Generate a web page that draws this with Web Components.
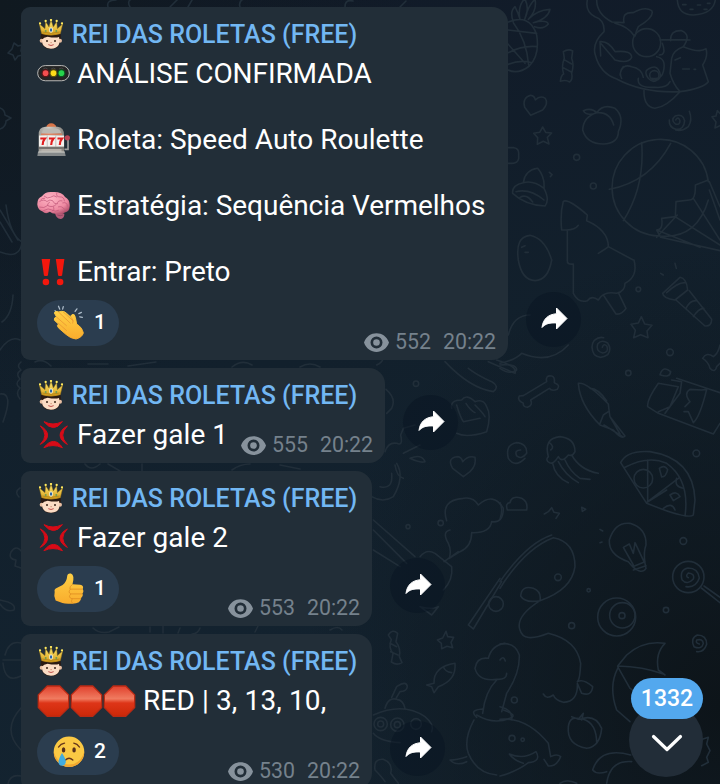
<!DOCTYPE html>
<html lang="pt-BR">
<head>
<meta charset="utf-8">
<title>Rei das Roletas</title>
<style>
html,body{margin:0;width:720px;height:784px;overflow:hidden;background:#111c27}
body{font-family:Roboto,"Liberation Sans",sans-serif;color:#fff}
</style>
</head>
<body>
<chat-screen></chat-screen>

<template id="wallpaper">
<style>
:host{display:block;width:720px;height:784px;background:
 radial-gradient(ellipse 420px 460px at 100% 90%,#0d1419 0,#0d141900 100%),
 radial-gradient(ellipse 420px 400px at 0 0,#101920 0,#10192000 100%),
 linear-gradient(170deg,#111a28 0,#12202c 45%,#142431 100%)}
svg{display:block;fill:none;stroke:#212e39;stroke-width:4.8;stroke-linecap:round;stroke-linejoin:round}
</style>
<svg width="720" height="784" viewBox="0 0 720 784">
<g transform="translate(500 0) scale(.33333)">
 <!-- pineapple -->
 <path d="M20 68Q90 38 110 105Q120 165 88 198Q50 228 15 205M24 90L110 100M22 130L75 190M40 68Q80 120 86 195M25 158Q70 135 112 140M22 194Q60 178 95 188M40 65Q28 35 45 20Q55 40 60 58Q52 20 74 -4Q90 25 74 58Q85 15 105 -2Q112 30 85 58Q110 30 150 28Q145 55 100 68Q140 58 145 72Q130 90 104 80"/>
 <!-- sweet -->
 <path d="M190 155q15-10 28-2l-3 22q8 18 0 45q4 18-6 26q-12-8-28-2q2-18 10-22q-8-22 2-47zM191 178l24 14M188 202l26 14"/>
 <!-- cat with ring -->
 <path d="M262 0Q255 35 285 50Q315 60 312 95Q275 130 286 165Q300 220 350 237Q430 280 540 275M290 0Q290 42 336 66L372 68Q365 35 400 38Q435 18 455 32Q465 50 415 80Q408 95 405 108M345 70Q385 80 403 108M302 168L300 125Q325 122 345 155Q395 150 395 172Q385 192 345 180L302 130M360 225Q365 190 395 200Q425 205 430 232M365 235Q355 215 370 200M480 120Q500 118 570 120M512 122Q510 90 545 92Q575 105 550 140Q600 160 618 146Q625 170 608 195L625 245Q610 265 540 275Q500 320 465 325Q430 320 432 270M550 140Q520 150 515 175L510 220Q520 255 540 275M487 130Q500 165 478 165M415 235Q410 265 465 262Q500 265 510 245M445 235q-15-20 0-28q25-15 33 8q10 20-12 28q-10 4-21-8zM470 170Q500 175 490 215Q485 240 455 235M525 180l16-7M548 207h20M582 208h5"/>
 <circle cx="440" cy="128" r="42"/><circle cx="463" cy="226" r="14"/>
 <path d="M532 0Q535 45 580 45Q640 42 646 0M548 14h10M570 28h9M592 15h10M612 28h9M622 10h8"/>
 <path d="M92 346L74 322Q66 293 92 286Q104 287 106 300Q120 285 136 295Q146 310 128 330zM128 381l9 16 18 2-13 13 5 20-17-8-18 9 1-20-12-13 18-3z"/>
 <path d="M290 338Q260 350 250 332Q275 322 290 338Q310 310 345 325Q375 350 355 395Q355 430 310 432Q260 432 248 390Q250 350 290 338Q330 335 341 375"/>
 <path d="M527 360q8-12 13 2q0 14-14 10q-15-12 0-24q22-8 28 14q-2 28-26 26q-22-6-20-28M568 334q10 26-3 46q-18 15-38 10"/>
 <path d="M660 340l-8-8-4 16-12 2 12 16-3 18 15-7"/>
 <circle cx="230" cy="472" r="9"/><circle cx="280" cy="558" r="9"/>
 <path d="M22 443h20q15 3 14 18v15q-3 14-20 14H20M70 548Q75 510 113 505Q135 530 132 565M70 548Q35 555 38 580Q75 615 135 618Q150 600 132 565Q100 540 70 548M48 575Q90 565 132 600M60 592Q80 580 98 606M148 517l8 7-5 6"/>
 <!-- balloon -->
 <path d="M625 545A145 145 0 1 0 475 708Q590 720 625 600M425 428Q435 560 370 662M512 430Q450 545 328 568M625 540L586 555Q588 600 568 600L528 605L526 650L485 655Q490 690 470 690L482 712L660 752M628 570L660 660M580 595L660 720M525 650L660 735M470 690L600 742M628 545L660 620M532 645L470 712"/>
 <path d="M185 690Q180 640 190 604Q205 595 262 645L260 662Q325 690 325 740L400 780M185 690h15Q225 690 235 676M202 690V780M325 740Q320 745 295 760M55 780Q45 710 90 706Q135 715 155 780M65 742l10-5M75 757h10"/>
</g>
<g transform="translate(500 260) scale(.33333)">
 <path d="M55 0Q65 60 105 62Q145 60 155 0M202 0Q200 15 220 12V100Q235 130 262 122Q275 105 295 120Q310 92 350 100Q375 95 375 70Q415 50 402 0M312 108L348 162Q365 165 378 145L355 98"/>
 <path d="M488 100L540 52Q560 55 563 90L525 120Q490 115 488 100M500 98Q535 65 558 68M528 120L615 198Q635 200 635 178L568 92M558 145Q570 120 590 122M580 170Q595 145 612 145M525 10l4 15M482 40l8 5"/>
 <path d="M424 170l10 22 22 4-15 17 3 20-22-9-21 9 5-22-13-18 22-4z"/>
 <path d="M307 262q4-14 14-3q6 19-13 20q-22-5-15-27q12-15 30-3q13 18 0 35q-22 16-40 0q-14-24 0-43q14-12 28-8"/>
 <path d="M25 225Q40 165 90 165M0 310Q45 300 65 280Q150 315 205 255M0 315Q50 310 50 330Q30 345 0 325"/>
 <path d="M70 407L140 365Q135 345 155 348Q165 350 163 368Q183 375 172 388Q155 395 148 385L92 420Q100 435 82 442Q68 440 70 430Q50 420 58 408z"/>
 <path d="M235 370Q260 365 325 432Q328 460 330 470L375 528Q365 540 340 510L300 495Q240 435 235 370M270 385Q295 385 320 423M300 490L310 465L325 455M330 470L360 522M312 495L368 530"/>
 <path d="M480 344Q490 315 512 335Q510 355 480 344M475 370Q440 420 443 440L475 460L640 522L660 490M475 370L535 380L510 440L475 455M515 360L545 365L540 400L495 460M530 355L620 385L660 398M555 440L570 425Q550 400 570 388L605 390L620 388Q600 470 580 488L565 455L552 455"/>
 <path d="M660 255Q655 280 640 290Q620 275 608 295Q625 305 630 325Q645 340 650 320L660 310"/>
 <circle cx="510" cy="277" r="10"/><circle cx="385" cy="339" r="8"/><circle cx="589" cy="580" r="10"/><circle cx="415" cy="88" r="7"/>
 <path d="M75 595Q45 625 25 595Q15 555 48 548Q82 550 80 580Q65 600 50 588Q42 570 62 570M148 608Q135 600 145 590Q130 535 180 530Q225 535 225 575Q218 590 205 585Q185 610 175 590Q160 615 148 608M158 610Q165 650 205 668M175 605Q195 645 235 668M195 600Q210 635 240 655L270 658M215 585Q240 630 295 640M152 570Q165 560 148 548"/>
 <path d="M362 608Q380 570 450 575Q580 595 585 720L580 765Q565 780 440 730Q420 700 362 608M375 622Q445 585 500 610Q570 660 555 768M443 600V725L535 655M440 728L500 690"/><circle cx="430" cy="656" r="28"/>
 <path d="M478 625q15-12 25 4q-5 22-18 22zM530 655q-8 25 20 30M510 705q20-15 30 5l-20 12zM490 745q25-20 35 5M22 750Q15 730 30 728Q35 705 65 715Q85 725 80 750zM133 762L145 755L155 743L162 757L178 760L168 775M0 728q10 20 0 50M245 742l12 6-10 6z"/>
</g>
<g transform="translate(500 520) scale(.33333)">
 <path d="M0 185Q80 70 155 45M0 205Q75 85 160 53Q225 65 225 140Q215 210 120 242Q75 250 62 228Q65 195 100 205Q125 215 120 242Q45 290 60 330Q70 370 145 340Q230 360 242 430Q240 480 232 485Q250 475 278 500Q275 530 245 520L232 490Q235 545 190 547Q165 540 160 525Q140 540 130 522"/>
 <path d="M398 140L385 125Q325 105 328 60Q345 5 390 10Q440 25 438 75Q430 95 435 130L438 145Q425 165 398 140L435 125M400 135L370 82L388 72L400 100L405 68L432 125M400 150L438 137"/>
 <circle cx="550" cy="63" r="10"/><circle cx="174" cy="172" r="10"/><circle cx="215" cy="317" r="9"/><circle cx="498" cy="270" r="8"/><circle cx="43" cy="540" r="9"/><circle cx="266" cy="211" r="5"/>
 <circle cx="565" cy="171" r="47"/><path d="M565 173q-10-5 0-14q20 2 15 18q-18 20-34 2q-8-30 18-35q30 0 34 30q-10 30-40 26M604 204L660 248M612 198L660 232"/>
 <circle cx="350" cy="291" r="57"/><circle cx="367" cy="286" r="38"/><circle cx="366" cy="287" r="9"/>
 <path d="M598 372q-12-2-8-12q18-5 20 10q-5 20-28 10q-12-25 10-35q28 0 28 28q-8 25-30 22"/>
 <path d="M495 370Q430 360 380 405L353 438Q430 440 490 462M495 370Q465 400 475 450L495 465M353 440L390 505L430 530M353 445Q325 500 350 570L390 605"/>
 <path d="M205 620Q210 585 240 598Q285 580 305 625Q300 680 260 685Q200 675 205 620M250 598Q290 610 290 670M215 590L235 598L250 580L245 600"/>
 <path d="M0 372Q45 365 58 405Q60 460 20 520L5 575M0 598Q80 590 145 670L152 710Q170 700 182 710Q170 740 145 738L132 718M0 768Q50 755 85 728Q125 725 108 695Q70 720 28 702Q40 720 70 730M0 560Q40 570 35 600"/>
 <circle cx="36" cy="655" r="9"/><circle cx="68" cy="659" r="5"/>
 <path d="M392 705Q300 680 278 750Q290 765 320 755M395 725Q330 720 320 790M180 790Q200 775 230 790M600 660l25-8-5 20 10 20-10 20 5 15-20 10M300 28l8 5M300 68l6-2"/>
</g>
<g transform="translate(360 350) scale(.33333)">
 <path d="M255 35Q330 115 400 125Q420 110 395 95Q350 75 325 55M385 35L465 70Q475 50 410 30M50 45Q70 35 68 25M78 118Q110 145 95 175L80 190"/>
 <path d="M290 250Q320 265 380 245Q395 195 380 170Q370 145 345 155Q320 130 305 150Q270 150 275 175M318 160Q330 180 345 188M290 165Q300 200 310 215L360 205M345 165Q370 190 375 200"/>
 <path d="M310 380L278 355Q260 325 290 320Q305 320 308 335Q325 315 345 322Q350 345 330 365z"/>
 <path d="M75 305Q85 275 110 280Q130 290 122 255L130 235L165 225M130 310L180 285M150 325Q185 310 195 335Q180 340 150 325M110 340Q135 380 100 440Q70 460 35 440M60 410Q100 420 95 370M105 345Q110 380 130 385"/>
 <path d="M260 512Q240 450 310 445Q340 440 355 465Q400 425 430 475Q430 520 395 515Q390 550 335 548Q335 590 300 605L268 625Q275 600 265 580Q245 545 270 540"/>
 <path d="M40 510L165 620M40 540L140 640M40 600L120 650M180 620Q200 595 225 610L275 650Q280 690 250 720M252 635L295 605"/>
 <circle cx="242" cy="519" r="8"/><circle cx="168" cy="101" r="8"/><circle cx="144" cy="530" r="6"/>
</g>
<g transform="translate(360 560) scale(.33333)">
 <path d="M325 195L420 55M340 207L425 65M325 195L340 207"/><circle cx="408" cy="132" r="22"/>
 <path d="M85 225q12-20 28-5l-5 25q15 20 10 45l8 18q-15 10-32-2l5-25q-15-20-5-42zM90 250l20 10M92 275l22 10M258 214l5 16 18 2-8 15 5 16-17-4-16 7-1-16-12-10 16-6z"/>
 <path d="M222 370Q220 320 285 310Q290 360 235 380L222 398L215 380L200 375zM250 320Q255 335 275 338"/>
 <path d="M345 325Q350 290 385 295Q395 255 435 250M345 325Q355 365 410 358Q440 360 440 340M410 360Q375 395 368 460M420 300q10-15 16 3M350 472Q325 450 368 447M430 450Q475 465 450 475Q400 495 350 465M342 480Q310 540 325 580Q350 640 410 645M320 605Q290 620 270 600Q290 600 320 590"/>
 <path d="M40 465Q130 425 195 470Q225 495 215 515M40 520Q60 545 120 548M75 445Q85 410 110 418Q130 420 135 445M95 412L110 380Q140 360 142 380Q140 395 120 395L108 415"/><circle cx="62" cy="492" r="20"/><circle cx="62" cy="492" r="9"/><circle cx="112" cy="494" r="20"/><circle cx="112" cy="494" r="9"/><circle cx="168" cy="492" r="16"/>
 <path d="M45 630Q40 595 70 598Q100 610 92 640L115 670M45 630Q65 650 75 665M180 140Q220 150 235 140L215 165z"/>
</g>
<g stroke-width="1.6">
 <path d="M14 43l4 3 4-1-1 6 2 4-5 1-3 4-2-5-5-2 4-4zM0 108q5 2 5 7l6 3-5 3q0 6-6 8M0 210l18 30M0 222l12 20M6 205Q10 235 22 242Q20 260 0 252M13 295Q12 315 2 322M0 350Q10 335 20 340"/>
 <path d="M0 394Q14 392 3 422M21 362q-5 4 0 8q-6 4-1 9q-6 5 0 9q-5 5 0 11M20 488q-6 4-1 9M22 552q-6-8-11 0q-3 7 5 8l-1 6 6 2M0 600l8 2q8 3 6 8q-8 3-14-6M3 663Q5 684 21 676M3 660h18M5 655q4-15 16-12M21 708q-20 22 0 42M8 784q2-10 13-8"/>
 <path d="M108 7Q106 0 116 0M130 7Q126 0 134-2M170 7l8-8M188 7l4-7M240 7q-2-6 5-9M345 7q0-8 8-6M400 7l6-6M35 362q8-4 16 4M88 364h20M128 366l28-4M232 367q10-8 20-2M85 464q6 8 15 0M108 464l12 7M142 464v7M232 470q8-6 18-6M93 628q6 6 16 4l10-5M150 632v-5M163 633v-7M180 628l-2 5M192 634q6 0 8-6M255 632l3-6M300 367q10-6 20 0M280 465l20 4M330 630q8-5 12 0"/>
</g>
</svg>
</template>

<script>
/* Emoji artwork: a body glyph lives in a 100-unit square. */
const GRAD = `<defs>
<linearGradient id="stop" x1="0" y1="0" x2="0" y2="1"><stop offset="0" stop-color="#e0402c"/><stop offset=".42" stop-color="#f07b60"/><stop offset=".56" stop-color="#de3518"/><stop offset="1" stop-color="#cc2808"/></linearGradient>
<linearGradient id="gold" x1="0" y1="0" x2="0" y2="1"><stop offset="0" stop-color="#fff07a"/><stop offset="1" stop-color="#d79a18"/></linearGradient>
<linearGradient id="hand" x1="0" y1="0" x2="0" y2="1"><stop offset="0" stop-color="#ffd045"/><stop offset="1" stop-color="#f9ac2d"/></linearGradient>
<linearGradient id="steel" x1="0" y1="0" x2="1" y2="0"><stop offset="0" stop-color="#9e9c97"/><stop offset=".4" stop-color="#d0cdc6"/><stop offset="1" stop-color="#87837d"/></linearGradient>
<radialGradient id="brain" cx=".4" cy=".3" r=".75"><stop offset="0" stop-color="#ffb5c4"/><stop offset=".7" stop-color="#ee8aa2"/><stop offset="1" stop-color="#b4526e"/></radialGradient>
</defs>`;
const ART = {
 king: ['0 0 72 90', `<path d="M6 44Q2 78 20 87Q36 94 54 86Q68 74 65 46z" fill="#2a1a13"/>
  <circle cx="8" cy="65" r="6" fill="#e9bfa2"/><circle cx="63" cy="65" r="6" fill="#e9bfa2"/>
  <path d="M9 62Q14 54 26 53Q48 58 60 54Q68 88 36 89Q8 88 9 62z" fill="#fbdcc4"/>
  <circle cx="24" cy="66" r="3" fill="#3b2519"/><circle cx="48" cy="66" r="3" fill="#3b2519"/>
  <path d="M28 77q8 5 16 0" stroke="#c0504b" stroke-width="3" fill="none"/><path d="M34 71h5" stroke="#d89e83" stroke-width="3"/>
  <path d="M8 44L1 15L18 29L20 8L30 24L36 3L43 24L53 8L55 29L71 15L64 44Q36 53 8 44z" fill="url(#gold)" stroke="#9b7414" stroke-width="1.5"/>
  <g fill="#ffe95e"><circle cx="3" cy="13" r="3.5"/><circle cx="20" cy="6" r="3.5"/><circle cx="36" cy="3" r="3.5"/><circle cx="53" cy="6" r="3.5"/><circle cx="69" cy="13" r="3.5"/></g>
  <path d="M10 39Q36 47 62 39" stroke="#9c7818" stroke-width="2" fill="none"/><ellipse cx="36" cy="33" rx="6" ry="8" fill="#f4f0ce"/><ellipse cx="36" cy="33" rx="3.5" ry="5" fill="#2c63a4"/><circle cx="20" cy="36" r="3" fill="#6b9b52"/><circle cx="52" cy="36" r="3" fill="#6b9b52"/>`],
 lights: ['0 0 100 100', `<rect x="2" y="26" width="96" height="46" rx="23" fill="#242424" stroke="#b9b9b7" stroke-width="3"/>
  <circle cx="26" cy="49" r="12" fill="#5d1517"/><circle cx="50" cy="49" r="12" fill="#5c5210"/><circle cx="74" cy="49" r="12" fill="#0e511f"/>
  <circle cx="26" cy="49" r="8.5" fill="#f34e50"/><circle cx="50" cy="49" r="8.5" fill="#ffdc19"/><circle cx="74" cy="49" r="8.5" fill="#26d34c"/>
  <path d="M19 36q7-5 13 0M43 36q7-5 13 0M67 36q7-5 13 0" stroke="#555" stroke-width="2" fill="none"/>`],
 slot: ['0 0 100 100', `<path d="M28 13Q30 2 43 1Q56 2 59 13z" fill="#d87549"/><path d="M83 80h11V48" stroke="#9b9b9b" stroke-width="5" fill="none"/><circle cx="92" cy="45" r="8" fill="#bd4556"/>
  <path d="M5 37Q4 12 25 11H62Q83 13 82 37V90H5z" fill="url(#steel)"/><path d="M15 30Q18 17 30 17H58Q70 18 73 30z" fill="#bcb9b3"/><path d="M12 34h64" stroke="#df7c58" stroke-width="4"/>
  <rect x="6" y="38" width="76" height="34" fill="#f4f1ed"/><path d="M31 38v34M57 38v34" stroke="#aaa" stroke-width="2"/><path d="M10 47h14q-7 8-7 20M36 47h14q-7 8-7 20M62 47h14q-7 8-7 20" stroke="#e01f20" stroke-width="6.500" fill="none"/>
  <path d="M6 72h76v7H6z" fill="#77736f"/><path d="M14 79h60v10H14z" fill="#b6b2ab"/><path d="M3 87h81l3 13H1z" fill="#85898a"/><path d="M4 88h80" stroke="#d2d1cb" stroke-width="3"/>`],
 brain: ['0 0 100 100', `<path d="M54 70Q57 92 73 91Q83 88 83 75z" fill="#b65b78"/><path d="M1 48Q0 28 15 22Q25 7 46 9Q75 7 85 24Q101 32 99 53Q98 69 84 71Q74 80 62 74Q48 77 39 69Q26 78 17 68Q3 65 1 48z" fill="url(#brain)"/>
  <path d="M8 55q14 5 24-5q15 8 26-3M8 38q12-9 22 0q9-8 17-3M22 22q10 9 19 3q10-9 19-1M60 12q-4 12 10 12q12-1 13 12M48 37q4 10 14 8q0-12 14-9M78 42q14-4 14 10M65 54q12-3 18 7M20 65q15-9 26-1q10 6 19 1M38 40q-8 4-6 10M50 54q4 10-3 12M12 32q4-5 11-4" stroke="#c0587a" stroke-width="2.2" fill="none" stroke-linecap="round"/>
  <path d="M62 79q8 4 17 0" stroke="#863f58" stroke-width="2" fill="none"/>`],
 bang: ['0 0 100 100', `<g fill="#f3170d"><path d="M14 12h26l-7 50q-6 4-12 0zM57 12h26l-7 50q-6 4-12 0z"/><circle cx="27" cy="82" r="10"/><circle cx="70" cy="82" r="10"/></g>`],
 anger: ['0 0 100 100', `<g fill="#d80b17" stroke="#d80b17" stroke-width="3" stroke-linejoin="round"><path d="M21 11Q48 25 77 11Q64 29 50 29Q35 29 21 11z"/><path d="M21 90Q48 77 77 90Q65 71 50 71Q35 71 21 90z"/><path d="M10 24Q32 36 32 52Q32 68 10 80Q24 66 24 52Q24 38 10 24z"/><path d="M92 24Q70 36 70 52Q70 68 92 80Q78 66 78 52Q78 38 92 24z"/></g>`],
 stop: ['0 0 100 100', `<path d="M31 6H69L96 33V71L69 98H31L4 71V33z" fill="url(#stop)" stroke="#b92a14" stroke-width="4" stroke-linejoin="round"/>`],
 clap: ['0 0 100 110', `<g fill="none" stroke="#aebdca" stroke-width="4" stroke-linecap="round"><path d="M6 18l4 5M17 4l4 9M32 5l-2 8M69 20l6-8M81 27l8-4M84 37l8 2"/></g>
  <path d="M60 30Q68 27 70 39L74 60Q91 70 95 88Q91 102 72 107Q54 105 40 92L17 72Q10 64 17 60L4 48Q2 39 11 38L4 25Q7 17 17 22L27 20Q35 19 42 26L58 40Q54 32 60 30z" fill="url(#hand)" stroke="url(#hand)" stroke-width="3"/>
  <path d="M11 38L42 65M17 58L42 80M17 22L54 57M32 22L63 50M58 40Q66 49 62 57" stroke="#e89530" stroke-width="2.4" fill="none" stroke-linecap="round"/>`],
 thumb: ['0 0 100 110', `<path d="M5 66Q2 57 13 53L30 44Q43 33 44 18Q45 6 56 8Q69 13 61 42L85 43Q98 45 93 57Q98 63 92 71Q96 78 88 85Q88 102 60 103Q33 103 23 98L8 93Q1 80 5 66z" fill="url(#hand)"/>
  <path d="M61 42Q50 49 53 57H90M54 58Q45 67 56 72H91M55 73Q46 83 59 87H87M60 88Q54 98 62 102" stroke="#df8e22" stroke-width="2.6" fill="none" stroke-linecap="round"/>`],
 cry: ['0 0 100 110', `<circle cx="50" cy="56" r="48" fill="#fbc944"/><path d="M2 56a48 48 0 0 0 96 0q-12 40-48 40T2 56z" fill="#f1a62f"/>
  <path d="M17 41Q24 31 36 29M65 29Q76 31 83 41" stroke="#65351b" stroke-width="4" fill="none" stroke-linecap="round"/><ellipse cx="33" cy="50" rx="5.5" ry="8" fill="#56301d"/><ellipse cx="66" cy="50" rx="5.5" ry="8" fill="#56301d"/>
  <path d="M39 82Q50 71 62 82" stroke="#65351b" stroke-width="4.5" fill="none" stroke-linecap="round"/><path d="M28 60Q41 80 40 89Q37 100 28 100Q17 99 17 88Q18 77 28 60z" fill="#42acdf"/>`]
};

class ChatWallpaper extends HTMLElement{
 constructor(){super();this.attachShadow({mode:'open'}).append(document.getElementById('wallpaper').content.cloneNode(true));}
}
class EmojiIcon extends HTMLElement{
 connectedCallback(){
  if(this.shadowRoot)return;
  const [vb,art]=ART[this.getAttribute('name')];
  this.attachShadow({mode:'open'}).innerHTML=`<style>:host{display:inline-block;width:33px;height:33px;vertical-align:top}svg{display:block;width:100%;height:100%}</style><svg viewBox="${vb}" aria-hidden="true">${GRAD}${art}</svg>`;
 }
}
class ReactionPill extends HTMLElement{
 constructor(){super();this.attachShadow({mode:'open'}).innerHTML=`<style>
 :host{display:flex;box-sizing:border-box;width:82px;height:46px;border-radius:23px;background:#2b3d4f;align-items:center;padding-left:16px;gap:9px;font-size:21px;font-weight:500;line-height:24px}
 emoji-icon{width:32px;height:35px;margin-top:-1px}span{margin-top:-3px}
 </style><emoji-icon name="${this.getAttribute('emoji')||'thumb'}"></emoji-icon><span><slot></slot></span>`;}
}
class ViewMeta extends HTMLElement{
 constructor(){super();this.attachShadow({mode:'open'}).innerHTML=`<style>
 :host{display:flex;align-items:center;font-size:21.3px;line-height:25px;color:#75818c;white-space:pre}
 svg{display:block;margin:1px 6px 0 0}.time{margin-left:12px}
 </style><svg width="25" height="19" viewBox="0 0 25 19"><path fill="#87929c" fill-rule="evenodd" d="M0 9.5C4-3 21-3 25 9.5C21 22 4 22 0 9.5ZM12.5 3.5a6 6 0 1 0 0 12a6 6 0 1 0 0-12Z"/><circle cx="12.5" cy="9.5" r="3.3" fill="#87929c"/></svg><span><slot></slot></span><span class="time"><slot name="time"></slot></span>`;}
}
class ShareButton extends HTMLElement{
 constructor(){super();this.attachShadow({mode:'open'}).innerHTML=`<style>
 :host{display:grid;place-items:center;width:55px;height:55px;border-radius:50%;background:#08142180}
 svg{display:block;margin-top:-2px;margin-left:1px}
 </style><svg width="27" height="23" viewBox="0 0 27 23"><path fill="#fff" stroke="#fff" stroke-width="1" stroke-linejoin="round" d="M15.5 1L26 11.5L15.5 22V16C9 15.6 4.500 16.500 1 20.500C2 12 7 7.500 15.500 6.700Z"/></svg>`;}
}
class ChatMessage extends HTMLElement{
 constructor(){super();this.attachShadow({mode:'open'}).innerHTML=`<style>
 :host{display:flex;align-items:flex-end;gap:18px}
 .bubble{display:grid;grid-template-rows:minmax(0,1fr);box-sizing:border-box;width:var(--w);height:var(--h);padding:12px 12px 6px 16px;border-radius:9px 16px 16px 9px;background:#222e38}
 .bubble>*{grid-area:1/1}
 .content{display:flex;flex-direction:column;min-height:0}
 header{display:flex;align-items:flex-start;height:38px;flex:none;color:#72b7f3;font-weight:500;font-size:25px;line-height:31px;white-space:nowrap}
 header emoji-icon{width:24px;height:30px;margin:0 9px 0 2px}
 .body{flex:none;font-size:28px;line-height:33px;white-space:pre;color:#fff}
 .react{display:flex;margin-top:12px}
 slot[name=meta]{display:block;align-self:end;justify-self:end}
 share-button{margin-bottom:13px}
 </style><div class="bubble"><div class="content"><header><emoji-icon name="king"></emoji-icon><span>REI DAS ROLETAS (FREE)</span></header><div class="body"><slot></slot></div><div class="react"><slot name="reaction"></slot></div></div><slot name="meta"></slot></div><share-button></share-button>`;}
}
class MessageLine extends HTMLElement{
 constructor(){super();this.attachShadow({mode:'open'}).innerHTML=`<style>:host{display:flex;height:33px;margin-bottom:var(--after,0)}.t{margin-left:7px;letter-spacing:var(--track,0)}</style><slot name="icon"></slot><span class="t"><slot></slot></span>`;}
}
class ScrollDown extends HTMLElement{
 constructor(){super();this.attachShadow({mode:'open'}).innerHTML=`<style>
 :host{display:flex;flex-direction:column;align-items:flex-end;width:74px}
 .badge{display:grid;place-items:center;width:72px;height:41px;border-radius:21px;background:#53a8ee;font-weight:500;font-size:23px;line-height:27px;z-index:1}
 .disc{display:grid;place-items:center;width:74px;height:74px;border-radius:50%;background:#222d38;margin-top:-16px}
 svg{margin:6px 0 0 1px}
 </style><div class="badge"><slot></slot></div><div class="disc"><svg width="32" height="18" viewBox="0 0 32 18"><path d="M2.500 2.500L16 15.500L29.500 2.500" fill="none" stroke="#fff" stroke-width="3.2" stroke-linecap="round" stroke-linejoin="round"/></svg></div>`;}
}
class ChatScreen extends HTMLElement{
 constructor(){super();
  const icon=n=>`<emoji-icon slot="icon" name="${n}"></emoji-icon>`;
  const meta=v=>`<view-meta slot="meta">${v}<span slot="time">20:22</span></view-meta>`;
  this.attachShadow({mode:'open'}).innerHTML=`<style>
 :host{display:grid;width:720px;height:784px;overflow:hidden;position:relative}
 chat-wallpaper,.list{grid-area:1/1}
 .list{display:flex;flex-direction:column;gap:8px;padding:7px 0 0 21px;min-height:0;z-index:1}
 scroll-down{position:absolute;right:17px;bottom:7px;z-index:2}
 .gap{--after:33px}
 </style><chat-wallpaper></chat-wallpaper><div class="list">
 <chat-message style="--w:487px;--h:353px"><message-line class="gap" style="--track:-.08px">${icon('lights')}ANÁLISE CONFIRMADA</message-line><message-line class="gap">${icon('slot')}Roleta: Speed Auto Roulette</message-line><message-line class="gap" style="--track:-.04px">${icon('brain')}Estratégia: Sequência Vermelhos</message-line><message-line style="--track:-.08px">${icon('bang')}Entrar: Preto</message-line><reaction-pill slot="reaction" emoji="clap">1</reaction-pill>${meta(552)}</chat-message>
 <chat-message style="--w:364px;--h:95px"><message-line style="--track:.05px">${icon('anger')}Fazer gale 1</message-line>${meta(555)}</chat-message>
 <chat-message style="--w:351px;--h:155px"><message-line style="--track:.05px">${icon('anger')}Fazer gale 2</message-line><reaction-pill slot="reaction" emoji="thumb">1</reaction-pill>${meta(553)}</chat-message>
 <chat-message style="--w:351px;--h:155px"><message-line style="--track:.12px">${icon('stop')}${icon('stop')}${icon('stop')}RED | 3, 13, 10,</message-line><reaction-pill slot="reaction" emoji="cry">2</reaction-pill>${meta(530)}</chat-message>
 </div><scroll-down>1332</scroll-down>`;}
}
customElements.define('chat-wallpaper',ChatWallpaper);
customElements.define('emoji-icon',EmojiIcon);
customElements.define('reaction-pill',ReactionPill);
customElements.define('view-meta',ViewMeta);
customElements.define('share-button',ShareButton);
customElements.define('message-line',MessageLine);
customElements.define('chat-message',ChatMessage);
customElements.define('scroll-down',ScrollDown);
customElements.define('chat-screen',ChatScreen);
</script>
</body>
</html>
